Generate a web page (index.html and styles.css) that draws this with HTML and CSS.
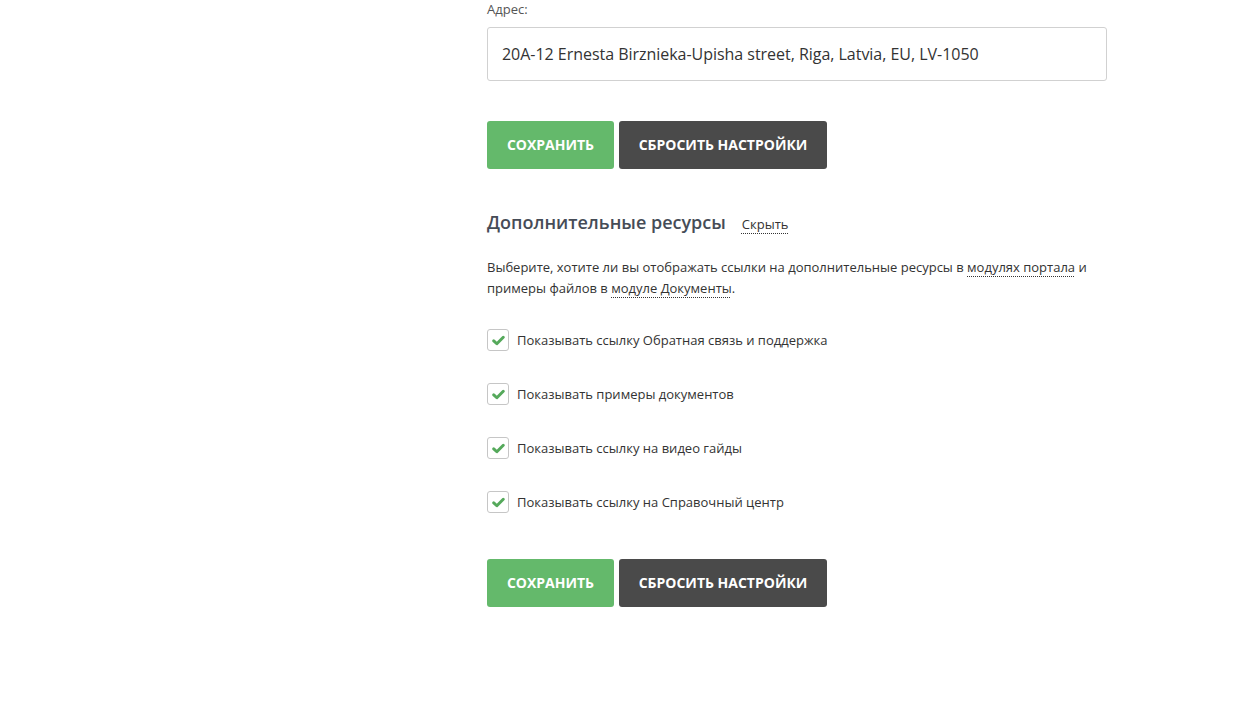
FILE: index.html
```html
<!DOCTYPE html>
<html lang="ru">
<head>
<meta charset="utf-8">
<link rel="stylesheet" href="styles.css">
</head>
<body>
<div class="page">
  <div class="content">
    <label class="field-label">Адрес:</label>
    <div class="input">20A-12 Ernesta Birznieka-Upisha street, Riga, Latvia, EU, LV-1050</div>
    <div class="buttons first">
      <button class="btn btn-save">Сохранить</button>
      <button class="btn btn-reset">Сбросить настройки</button>
    </div>
    <div class="section-head">
      <h2 class="section-title">Дополнительные ресурсы</h2>
      <span class="dotted-link small">Скрыть</span>
    </div>
    <p class="desc">Выберите, хотите ли вы отображать ссылки на дополнительные ресурсы в <span class="dotted-link">модулях портала</span> и примеры файлов в <span class="dotted-link">модуле Документы</span>.</p>
    <div class="checks">
      <div class="check-row"><span class="box"><svg viewBox="0 0 14 12" width="13" height="11"><path d="M1.8 6.4 L5.2 9.6 L12.2 2.4" fill="none" stroke="#55a95b" stroke-width="3.2" stroke-linecap="round" stroke-linejoin="round"/></svg></span><span class="check-label">Показывать ссылку Обратная связь и поддержка</span></div>
      <div class="check-row"><span class="box"><svg viewBox="0 0 14 12" width="13" height="11"><path d="M1.8 6.4 L5.2 9.6 L12.2 2.4" fill="none" stroke="#55a95b" stroke-width="3.2" stroke-linecap="round" stroke-linejoin="round"/></svg></span><span class="check-label">Показывать примеры документов</span></div>
      <div class="check-row"><span class="box"><svg viewBox="0 0 14 12" width="13" height="11"><path d="M1.8 6.4 L5.2 9.6 L12.2 2.4" fill="none" stroke="#55a95b" stroke-width="3.2" stroke-linecap="round" stroke-linejoin="round"/></svg></span><span class="check-label">Показывать ссылку на видео гайды</span></div>
      <div class="check-row"><span class="box"><svg viewBox="0 0 14 12" width="13" height="11"><path d="M1.8 6.4 L5.2 9.6 L12.2 2.4" fill="none" stroke="#55a95b" stroke-width="3.2" stroke-linecap="round" stroke-linejoin="round"/></svg></span><span class="check-label">Показывать ссылку на Справочный центр</span></div>
    </div>
    <div class="buttons last">
      <button class="btn btn-save">Сохранить</button>
      <button class="btn btn-reset">Сбросить настройки</button>
    </div>
  </div>
</div>
</body>
</html>
```

FILE: styles.css
```css
html, body {
  margin: 0;
  padding: 0;
  background: #fff;
}
body {
  font-family: "Open Sans", "Noto Sans", sans-serif;
  color: #333;
}
.page {
  padding-left: 487px;
}
.content {
  width: 620px;
  display: flex;
  flex-direction: column;
}
.field-label {
  font-size: 13px;
  line-height: 19px;
  color: #555;
  margin-bottom: 8px;
}
.input {
  box-sizing: border-box;
  height: 54px;
  border: 1px solid #d1d1d1;
  border-radius: 3px;
  padding: 0 14px;
  display: flex;
  align-items: center;
  font-size: 16px;
  letter-spacing: -0.03px;
  color: #333;
}
.buttons {
  display: flex;
  gap: 5px;
}
.buttons.first { margin-top: 40px; }
.buttons.last { margin-top: 46px; }
.btn {
  height: 48px;
  border: none;
  border-radius: 3px;
  font-family: "Open Sans", "Noto Sans", sans-serif;
  font-weight: 700;
  font-size: 14px;
  text-transform: uppercase;
  color: #fff;
  padding: 0 0 2px;
  cursor: pointer;
}
.btn-save {
  width: 127px;
  background: #64b96b;
}
.btn-reset {
  width: 208px;
  background: #4a4a4a;
}
.section-head {
  margin-top: 41px;
  display: flex;
  align-items: baseline;
  gap: 16px;
}
.section-title {
  margin: 0;
  font-size: 18px;
  line-height: 24px;
  font-weight: 600;
  color: #464c57;
}
.dotted-link {
  text-decoration: underline dotted #333;
  text-decoration-thickness: 1px;
  text-underline-offset: 4px;
  color: #333;
}
.dotted-link.small {
  font-size: 13px;
  line-height: 16px;
}
.desc {
  margin: 23px 0 0;
  font-size: 13px;
  line-height: 21px;
  color: #333;
}
.checks {
  margin-top: 30px;
  display: flex;
  flex-direction: column;
  gap: 32px;
}
.check-row {
  display: flex;
  align-items: center;
  height: 22px;
  gap: 8px;
}
.box {
  box-sizing: border-box;
  width: 22px;
  height: 22px;
  border: 1px solid #c6c6c6;
  border-radius: 3px;
  display: flex;
  align-items: center;
  justify-content: center;
}
.check-label {
  font-size: 13px;
  color: #333;
}
```
